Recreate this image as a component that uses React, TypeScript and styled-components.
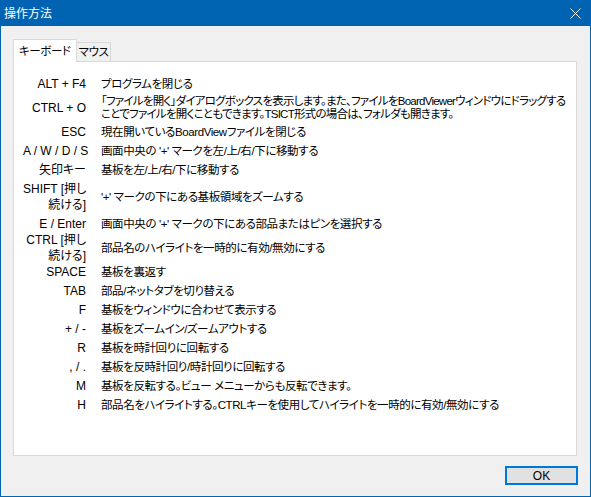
import React from "react";
import styled, { createGlobalStyle } from "styled-components";

const GlobalStyle = createGlobalStyle`
  html, body {
    margin: 0;
    padding: 0;
    background: #f0f0f0;
  }
  * {
    box-sizing: border-box;
  }
`;

const Window = styled.div`
  width: 591px;
  height: 497px;
  border: 1px solid #0063b1;
  background: #f0f0f0;
  display: flex;
  flex-direction: column;
  font-family: "Liberation Sans", "Noto Sans CJK JP", sans-serif;
  font-feature-settings: "palt";
  font-size: 12px;
  color: #000;
`;

const TitleBar = styled.div`
  height: 25px;
  background: #0063b1;
  color: #fff;
  display: flex;
  align-items: center;
  justify-content: space-between;
  padding: 0 9px 0 3px;
  flex-shrink: 0;
`;

const TitleText = styled.span`
  font-size: 12px;
  line-height: 16px;
`;

const CloseButton = styled.div`
  width: 12px;
  height: 12px;
  display: flex;
  align-items: center;
  justify-content: center;
`;

const Body = styled.div`
  flex: 1;
  display: flex;
  flex-direction: column;
  padding: 13px 13px 12px 12px;
`;

const TabStrip = styled.div`
  display: flex;
  align-items: flex-end;
  height: 23px;
  position: relative;
  z-index: 1;
  margin-bottom: -1px;
`;

const Tab = styled.div<{ $active?: boolean }>`
  height: ${(p) => (p.$active ? "23px" : "20px")};
  padding: ${(p) => (p.$active ? "0 5px" : "0 2px")};
  background: ${(p) => (p.$active ? "#fff" : "#f0f0f0")};
  border: 1px solid #d9d9d9;
  border-bottom: ${(p) => (p.$active ? "none" : "1px solid #d9d9d9")};
  border-left: ${(p) => (p.$active ? "1px solid #d9d9d9" : "none")};
  display: flex;
  align-items: center;
  font-size: 11.5px;
  letter-spacing: -0.4px;
  line-height: 16px;
`;

const Panel = styled.div`
  height: 395px;
  background: #fff;
  border: 1px solid #d9d9d9;
  padding: 14px 0 0 9px;
`;

const KeyTable = styled.div`
  display: grid;
  grid-template-columns: 63px 1fr;
  column-gap: 15px;
  row-gap: 3px;
  align-items: center;
`;

const KeyCell = styled.div<{ $compact?: boolean }>`
  text-align: right;
  line-height: 16px;
  white-space: nowrap;
  margin: ${(p) => (p.$compact ? "-3px 0" : "0")};
`;

const DescCell = styled.div<{ $tight?: boolean }>`
  font-size: 11.5px;
  letter-spacing: ${(p) => (p.$tight ? "-0.75px" : "-0.4px")};
  line-height: 13px;
  white-space: nowrap;
`;

const Footer = styled.div`
  display: flex;
  justify-content: flex-end;
  padding-top: 10px;
  margin-right: -1px;
`;

const OkButton = styled.button`
  width: 73px;
  height: 19px;
  background: #e1e1e1;
  border: 2px solid #0078d7;
  font-family: inherit;
  font-size: 12px;
  line-height: 14px;
  padding: 0;
  color: #000;
`;

type Row = { keys: string[]; desc: string[]; compact?: boolean; tight?: boolean };

const rows: Row[] = [
  { keys: ["ALT + F4"], desc: ["プログラムを閉じる"] },
  {
    keys: ["CTRL + O"],
    desc: [
      "「ファイルを開く」ダイアログボックスを表示します。また、ファイルをBoardViewerウィンドウにドラッグする",
      "ことでファイルを開くこともできます。TSICT形式の場合は、フォルダも開きます。",
    ],
    tight: true,
  },
  { keys: ["ESC"], desc: ["現在開いているBoardViewファイルを閉じる"] },
  { keys: ["A / W / D / S"], desc: ["画面中央の '+' マークを左/上/右/下に移動する"] },
  { keys: ["矢印キー"], desc: ["基板を左/上/右/下に移動する"] },
  { keys: ["SHIFT [押し", "続ける]"], desc: ["'+' マークの下にある基板領域をズームする"] },
  { keys: ["E / Enter"], desc: ["画面中央の '+' マークの下にある部品またはピンを選択する"] },
  { keys: ["CTRL [押し", "続ける]"], desc: ["部品名のハイライトを一時的に有効/無効にする"], compact: true },
  { keys: ["SPACE"], desc: ["基板を裏返す"] },
  { keys: ["TAB"], desc: ["部品/ネットタブを切り替える"] },
  { keys: ["F"], desc: ["基板をウィンドウに合わせて表示する"] },
  { keys: ["+ / -"], desc: ["基板をズームイン/ズームアウトする"] },
  { keys: ["R"], desc: ["基板を時計回りに回転する"] },
  { keys: [", / ."], desc: ["基板を反時計回り/時計回りに回転する"] },
  { keys: ["M"], desc: ["基板を反転する。ビュー メニューからも反転できます。"] },
  { keys: ["H"], desc: ["部品名をハイライトする。CTRLキーを使用してハイライトを一時的に有効/無効にする"] },
];

const Lines: React.FC<{ lines: string[] }> = ({ lines }) => (
  <>
    {lines.map((l, i) => (
      <React.Fragment key={i}>
        {i > 0 && <br />}
        {l}
      </React.Fragment>
    ))}
  </>
);

export default function App() {
  return (
    <>
      <GlobalStyle />
      <Window>
        <TitleBar>
          <TitleText>操作方法</TitleText>
          <CloseButton>
            <svg width="11" height="11" viewBox="0 0 11 11">
              <path d="M0.5 0.5 L10.5 10.5 M10.5 0.5 L0.5 10.5" stroke="#fff" strokeWidth="1" />
            </svg>
          </CloseButton>
        </TitleBar>
        <Body>
          <TabStrip>
            <Tab $active>キーボード</Tab>
            <Tab>マウス</Tab>
          </TabStrip>
          <Panel>
            <KeyTable>
              {rows.map((r, i) => (
                <React.Fragment key={i}>
                  <KeyCell $compact={r.compact}>
                    <Lines lines={r.keys} />
                  </KeyCell>
                  <DescCell $tight={r.tight}>
                    <Lines lines={r.desc} />
                  </DescCell>
                </React.Fragment>
              ))}
            </KeyTable>
          </Panel>
          <Footer>
            <OkButton>OK</OkButton>
          </Footer>
        </Body>
      </Window>
    </>
  );
}
